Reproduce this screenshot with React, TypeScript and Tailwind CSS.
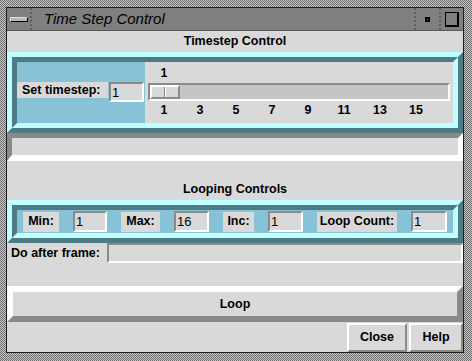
import React from "react";

const font = "font-['Liberation_Sans','Helvetica',sans-serif]";
const field =
  "bg-[#d9d9d9] border-2 border-t-[#8a8a8a] border-l-[#8a8a8a] border-b-white border-r-white text-[13px] leading-none flex items-center pl-[1px] text-black";
const label = "bg-[#d9d9d9] h-[20px] flex items-center justify-center text-[12.5px] font-bold text-black";

const Etched = ({ className, children }: { className?: string; children: React.ReactNode }) => (
  <div className="border-[5px] border-t-[#c0ffff] border-l-[#c0ffff] border-b-[#4e7b83] border-r-[#4e7b83]">
    <div className={"border-[5px] border-t-[#4e7b83] border-l-[#4e7b83] border-b-[#c0ffff] border-r-[#c0ffff] " + (className ?? "")}>
      {children}
    </div>
  </div>
);

const ticks = ["1", "3", "5", "7", "9", "11", "13", "15"];

export default function App() {
  return (
    <div
      className={`${font} w-[472px] h-[361px] pl-[6px] pt-[7px] pr-[8px] pb-[8px] bg-[repeating-conic-gradient(#c4c4c4_0%_25%,#707070_0%_50%)] bg-size-[2px_2px]`}
    >
      <div className="h-full border border-[#1e1e1e] flex flex-col bg-[#d9d9d9]">
        {/* title bar */}
        <div className="h-[23px] bg-[#7f7f7f] flex items-stretch border-b border-[#5a5a5a]">
          <div className="w-[25px] flex items-center justify-center border-r-2 border-dotted border-[#5f5f5f]">
            <div className="w-[18px] h-[5px] bg-[#b8b8b8] border border-black border-t-[#e0e0e0] border-l-[#e0e0e0]" />
          </div>
          <div className="flex-1 pl-[12px] flex items-center text-[15px] italic text-black">Time Step Control</div>
          <div className="w-[25px] flex items-center justify-center border-l-2 border-dotted border-[#5f5f5f]">
            <div className="w-[5px] h-[5px] border-2 border-black" />
          </div>
          <div className="w-[24px] flex items-center justify-center border-l-2 border-dotted border-[#5f5f5f]">
            <div className="w-[14px] h-[15px] bg-[#7f7f7f] border border-black border-r-2 border-b-2" />
          </div>
        </div>

        {/* timestep control */}
        <div className="h-[21px] flex items-center justify-center text-[12.5px] font-bold text-black">Timestep Control</div>
        <Etched className="flex h-[71px]">
          <div className="w-[128px] bg-[#87c2d6] flex items-start pt-[20px]">
            <div className="w-[91px] h-[16px] bg-[#d9d9d9] flex items-center pl-[5px] text-[12.5px] font-bold text-black">Set timestep:</div>
            <div className={`${field} ml-[1px] w-[35px] h-[20px]`}>1</div>
          </div>
          <div className="flex-1 bg-[#d9d9d9] flex flex-col px-[3px] pt-[3px]">
            <div className="h-[16px] flex text-[12.5px] font-bold text-black">
              <div className="w-[36px] ml-[-2px] text-center leading-[16px]">1</div>
            </div>
            <div className="mt-[2px] h-[18px] bg-[#c4c4c4] border-2 border-t-[#8a8a8a] border-l-[#8a8a8a] border-b-white border-r-white flex">
              <div className="w-[30px] h-full flex border-2 border-t-white border-l-white border-b-[#8a8a8a] border-r-[#8a8a8a] bg-[#d9d9d9]">
                <div className="w-[13px] h-full border-r border-[#8a8a8a]" />
                <div className="flex-1 h-full border-l border-white" />
              </div>
            </div>
            <div className="h-[16px] mt-[1px] flex text-[12.5px] font-bold text-black leading-[16px]">
              {ticks.map((t, i) => (
                <div key={i} className={"w-[36px] text-center" + (i === 0 ? " ml-[-2px]" : "")}>
                  {t}
                </div>
              ))}
            </div>
          </div>
        </Etched>

        {/* empty sunken bar */}
        <div className="h-[28px] bg-[#d9d9d9] border-[5px] border-t-[#8a8a8a] border-l-[#8a8a8a] border-b-white border-r-white border-b-[6px]" />

        {/* looping controls */}
        <div className="h-[39px] flex items-end justify-center pb-[1px] text-[12.5px] font-bold text-black">Looping Controls</div>
        <Etched className="h-[33px] bg-[#87c2d6] flex items-center pl-[6px] gap-[14px]">
          <div className={`${label} w-[36px]`}>Min:</div>
          <div className={`${field} w-[34px] h-[21px]`}>1</div>
          <div className={`${label} w-[39px]`}>Max:</div>
          <div className={`${field} w-[35px] h-[21px]`}>16</div>
          <div className={`${label} w-[31px]`}>Inc:</div>
          <div className={`${field} w-[35px] h-[21px]`}>1</div>
          <div className={`${label} w-[80px]`}>Loop Count:</div>
          <div className={`${field} w-[36px] h-[21px]`}>1</div>
        </Etched>

        {/* do after frame */}
        <div className="h-[20px] flex items-stretch">
          <div className="w-[100px] pl-[4px] flex items-center text-[12.5px] font-bold text-black">Do after frame:</div>
          <div className={`${field} flex-1`} />
        </div>

        <div className="h-[23px]" />

        {/* loop button */}
        <div className="h-[36px] bg-[#d9d9d9] border-[6px] border-t-white border-l-white border-b-[#8a8a8a] border-r-[#8a8a8a] flex items-center justify-center text-[12.5px] font-bold text-black">
          Loop
        </div>

        {/* close / help */}
        <div className="flex-1 flex justify-end items-start pt-[1px] gap-[2px]">
          <div className="w-[60px] h-[29px] border-2 border-t-white border-l-white border-b-[#8a8a8a] border-r-[#8a8a8a] flex items-center justify-center text-[12.5px] font-bold text-black">
            Close
          </div>
          <div className="w-[54px] h-[29px] border-2 border-t-white border-l-white border-b-[#8a8a8a] border-r-[#8a8a8a] flex items-center justify-center text-[12.5px] font-bold text-black">
            Help
          </div>
        </div>
      </div>
    </div>
  );
}
